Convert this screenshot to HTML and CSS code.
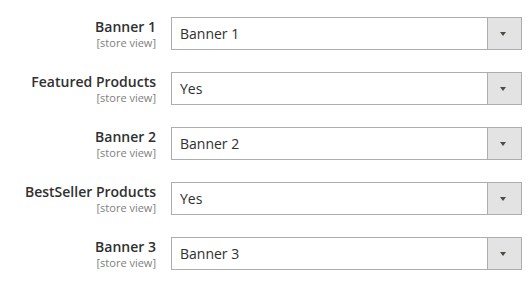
FILE: index.html
```html
<!DOCTYPE html>
<html lang="en">
<head>
    <meta charset="UTF-8">
    <title>Configuration</title>
    <link rel="stylesheet" href="styles.css">
</head>
<body>
    <div class="fieldset">
        <div class="field">
            <div class="label">
                <span class="name">Banner 1</span>
                <span class="scope">[store view]</span>
            </div>
            <div class="select">
                <span class="value">Banner 1</span>
                <span class="arrow"></span>
            </div>
        </div>
        <div class="field">
            <div class="label">
                <span class="name">Featured Products</span>
                <span class="scope">[store view]</span>
            </div>
            <div class="select">
                <span class="value">Yes</span>
                <span class="arrow"></span>
            </div>
        </div>
        <div class="field">
            <div class="label">
                <span class="name">Banner 2</span>
                <span class="scope">[store view]</span>
            </div>
            <div class="select">
                <span class="value">Banner 2</span>
                <span class="arrow"></span>
            </div>
        </div>
        <div class="field">
            <div class="label">
                <span class="name">BestSeller Products</span>
                <span class="scope">[store view]</span>
            </div>
            <div class="select">
                <span class="value">Yes</span>
                <span class="arrow"></span>
            </div>
        </div>
        <div class="field">
            <div class="label">
                <span class="name">Banner 3</span>
                <span class="scope">[store view]</span>
            </div>
            <div class="select">
                <span class="value">Banner 3</span>
                <span class="arrow"></span>
            </div>
        </div>
    </div>
</body>
</html>
```

FILE: styles.css
```css
*{
    margin: 0;
    padding: 0;
    box-sizing: border-box;
}

body{
    background-color: #ffffff;
    font-family: "Open Sans", Arial, sans-serif;
    color: #303030;
}

.fieldset{
    padding-top: 17px;
    display: flex;
    flex-direction: column;
    gap: 22px;
}

.field{
    display: flex;
    gap: 15px;
}

.label{
    width: 156px;
    display: flex;
    flex-direction: column;
    align-items: flex-end;
    text-align: right;
    padding-top: 1px;
}

.name{
    font-size: 14px;
    font-weight: 600;
    line-height: 18px;
    color: #303030;
}

.scope{
    font-size: 11px;
    line-height: 14px;
    color: #808080;
}

.select{
    width: 351px;
    height: 33px;
    border: 1px solid #adadad;
    display: flex;
    align-items: center;
}

.value{
    flex: 1;
    padding-left: 8px;
    font-size: 14px;
    color: #303030;
}

.arrow{
    width: 34px;
    height: 31px;
    border-left: 1px solid #adadad;
    background-color: #e3e3e3;
    position: relative;
}

.arrow::after{
    content: "";
    position: absolute;
    left: 12px;
    top: 14px;
    border-left: 3.5px solid transparent;
    border-right: 3.5px solid transparent;
    border-top: 4px solid #514943;
}
```
